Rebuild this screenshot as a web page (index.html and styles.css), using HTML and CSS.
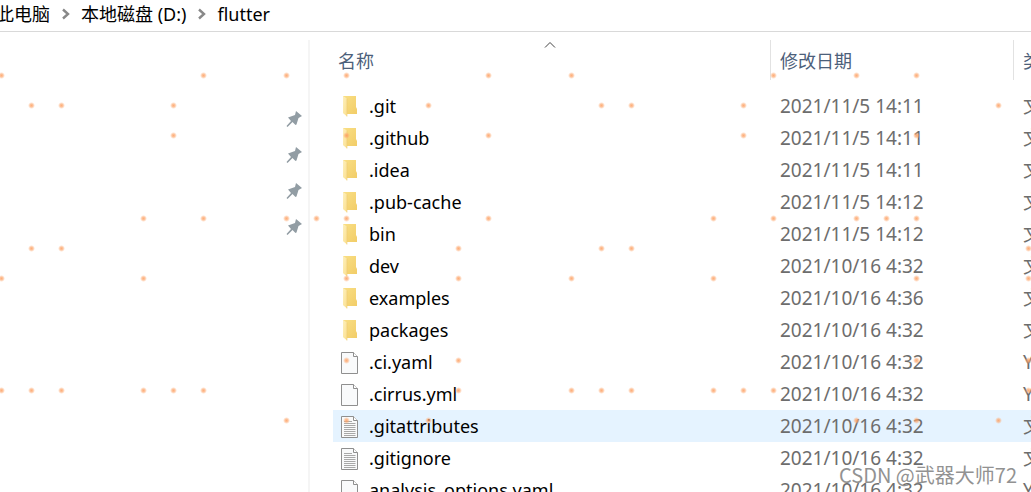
FILE: index.html
```
<!DOCTYPE html>
<html lang="zh-CN">
<head>
<meta charset="utf-8">
<title>flutter</title>
<link rel="stylesheet" href="styles.css">
</head>
<body>
<svg class="defs" aria-hidden="true">
  <defs>
    <linearGradient id="flap" x1="0" y1="0" x2="1" y2="1"><stop offset="0" stop-color="#fdf0be"/><stop offset="1" stop-color="#fbdf8c"/></linearGradient>
    <linearGradient id="back" x1="0" y1="0" x2="1" y2="1"><stop offset="0" stop-color="#f9df85"/><stop offset="1" stop-color="#f2cd68"/></linearGradient>
    <radialGradient id="spot"><stop offset="0" stop-color="#fd9a5a" stop-opacity=".8"/><stop offset=".45" stop-color="#fda468" stop-opacity=".65"/><stop offset="1" stop-color="#fdb483" stop-opacity="0"/></radialGradient>
  </defs>
  <symbol id="folder" viewBox="0 0 18 24">
    <path d="M2 1H15V12L16 14V19H6L2 18Z" fill="url(#back)"/>
    <path d="M2 1L6 3.500V21.500L2 18Z" fill="url(#flap)"/>
    <path d="M6 3.500V21.500" stroke="#ecca76" stroke-width=".6"/>
  </symbol>
  <symbol id="page" viewBox="0 0 18 24">
    <path d="M.5 1.500H12.500L16.500 5.500V22.500H.5Z" fill="#f9fafb" stroke="#8f8f8f"/>
    <path d="M12.500 1.500V5.500H16.500" fill="#fff" stroke="#8f8f8f"/>
  </symbol>
  <symbol id="text" viewBox="0 0 18 24">
    <use href="#page"/>
    <path d="M3 6.500H11M3 8.500H14.500M3 10.500H14.500M3 12.500H14.500M3 14.500H14.500M3 16.500H14.500M3 18.500H14.500M3 20.500H14.500" stroke="#a8a8a8"/>
  </symbol>
  <symbol id="pin" viewBox="0 0 16 16">
    <path d="M10 0L16 5L12.500 7L10.500 13.500L9.500 14L6.500 11L1.500 16L.5 15L5 10L2 6.500L9 4Z" fill="#929da4"/>
  </symbol>
  <symbol id="sep" viewBox="0 0 10 12">
    <path d="M2 1.500L7 6L2 10.500" fill="none" stroke="#888" stroke-width="2.400"/>
  </symbol>
  <symbol id="dot" viewBox="0 0 6 6"><circle cx="3" cy="3" r="3" fill="url(#spot)"/></symbol>
</svg>

<nav class="path" aria-label="路径">
  <a href="#">此电脑</a>
  <svg class="sep"><use href="#sep"/></svg>
  <a href="#">本地磁盘 (D:)</a>
  <svg class="sep"><use href="#sep"/></svg>
  <a href="#">flutter</a>
</nav>

<div class="body">
  <aside class="side">
    <button class="pin" aria-label="取消固定"><svg><use href="#pin"/></svg></button>
    <button class="pin" aria-label="取消固定"><svg><use href="#pin"/></svg></button>
    <button class="pin" aria-label="取消固定"><svg><use href="#pin"/></svg></button>
    <button class="pin" aria-label="取消固定"><svg><use href="#pin"/></svg></button>
  </aside>
  <main class="main">
    <table class="files">
      <colgroup><col class="c-name"><col class="c-date"><col class="c-type"></colgroup>
      <thead>
        <tr>
          <th><div class="head"><svg class="sort" viewBox="0 0 12 8"><path d="M1 6.500L6 1.500L11 6.500" fill="none" stroke="#444"/></svg>名称</div></th>
          <th><div class="head">修改日期</div></th>
          <th><div class="head">类型</div></th>
        </tr>
      </thead>
      <tbody>
        <tr><td><svg class="icon"><use href="#folder"/></svg>.git</td><td>2021/11/5 14:11</td><td>文件夹</td></tr>
        <tr><td><svg class="icon"><use href="#folder"/></svg>.github</td><td>2021/11/5 14:11</td><td>文件夹</td></tr>
        <tr><td><svg class="icon"><use href="#folder"/></svg>.idea</td><td>2021/11/5 14:11</td><td>文件夹</td></tr>
        <tr><td><svg class="icon"><use href="#folder"/></svg>.pub-cache</td><td>2021/11/5 14:12</td><td>文件夹</td></tr>
        <tr><td><svg class="icon"><use href="#folder"/></svg>bin</td><td>2021/11/5 14:12</td><td>文件夹</td></tr>
        <tr><td><svg class="icon"><use href="#folder"/></svg>dev</td><td>2021/10/16 4:32</td><td>文件夹</td></tr>
        <tr><td><svg class="icon"><use href="#folder"/></svg>examples</td><td>2021/10/16 4:36</td><td>文件夹</td></tr>
        <tr><td><svg class="icon"><use href="#folder"/></svg>packages</td><td>2021/10/16 4:32</td><td>文件夹</td></tr>
        <tr><td><svg class="icon"><use href="#page"/></svg>.ci.yaml</td><td>2021/10/16 4:32</td><td>YAML 文件</td></tr>
        <tr><td><svg class="icon"><use href="#page"/></svg>.cirrus.yml</td><td>2021/10/16 4:32</td><td>YML 文件</td></tr>
        <tr class="hover"><td><svg class="icon"><use href="#text"/></svg>.gitattributes</td><td>2021/10/16 4:32</td><td>文本文档</td></tr>
        <tr><td><svg class="icon"><use href="#text"/></svg>.gitignore</td><td>2021/10/16 4:32</td><td>文本文档</td></tr>
        <tr><td><svg class="icon"><use href="#page"/></svg>analysis_options.yaml</td><td>2021/10/16 4:32</td><td>YAML 文件</td></tr>
      </tbody>
    </table>
  </main>
</div>

<svg class="dots" id="dots" aria-hidden="true"></svg>
<div class="mark">CSDN @武器大师72</div>
<script src="dots.js"></script>
</body>
</html>
```
FILE: styles.css
```
* { box-sizing: border-box; }

html, body { height: 100%; }

body {
  margin: 0;
  display: flex;
  flex-direction: column;
  overflow: hidden;
  position: relative;
  background: #fff;
  color: #000;
  font: 18px/32px "Noto Sans", "Noto Sans CJK SC", sans-serif;
}

.defs { position: absolute; width: 0; height: 0; }

.path {
  flex: none;
  display: flex;
  align-items: center;
  height: 32px;
  margin-left: -4px;
  padding-bottom: 3px;
  border-bottom: 1px solid #d9d9d9;
  white-space: nowrap;
}

.path a { color: inherit; text-decoration: none; }

.sep { width: 10px; height: 12px; margin: 0 10px 0 11px; }

.body { flex: 1; display: flex; min-height: 0; padding-top: 8px; }

.side {
  flex: none;
  width: 310px;
  display: flex;
  flex-direction: column;
  align-items: flex-end;
  padding: 61px 6px 0 0;
  border-right: 2px solid #f5f5f5;
}

.pin {
  display: flex;
  align-items: center;
  height: 36px;
  padding: 0;
  border: 0;
  background: none;
}

.pin svg { width: 16px; height: 16px; }

.main { flex: 1; min-width: 0; overflow: hidden; padding-left: 23px; }

.files {
  width: 100%;
  table-layout: fixed;
  border-collapse: collapse;
}

.c-name { width: 437px; }
.c-date { width: 243px; }

th, td {
  height: 32px;
  padding: 0 0 0 10px;
  overflow: hidden;
  white-space: nowrap;
  text-align: left;
  font-weight: 400;
}

td { color: #6d6d6d; font-size: 19px; }
td:first-child { padding-left: 8px; color: #000; font-size: 18px; }

th { height: 50px; padding: 0 0 10px; vertical-align: top; color: #4c607a; }

.head {
  position: relative;
  height: 40px;
  padding: 5px 0 0 9px;
  border-left: 1px solid #e2e2e2;
}

th:first-child .head { border-left: 0; padding-left: 5px; }

.sort { position: absolute; top: 1px; left: 50%; margin-left: -8px; width: 12px; height: 8px; }

.icon { width: 18px; height: 24px; margin: 0 10px 2px 0; vertical-align: middle; }

.hover { background: #e5f3ff; }

.dots { position: absolute; inset: 0; width: 100%; height: 100%; pointer-events: none; }

.mark {
  position: absolute;
  right: 14px;
  bottom: 1px;
  color: #808080;
  opacity: .85;
  font-family: "Noto Sans CJK SC", sans-serif;
  font-size: 20px;
}
```
FILE: dots.js
```
const rows = {
  75: [1, 203, 286, 346, 488, 571, 773, 856, 916],
  105: [31, 61, 173, 428, 601, 631, 743, 998],
  135: [173, 346, 488, 743, 916],
  218: [143, 203, 286, 316, 346, 488, 713, 773, 856, 886, 916],
  248: [31, 61, 458, 601, 631, 1028],
  278: [1, 143, 346, 458, 571, 713, 916, 1028],
  360: [346, 458, 916, 1028],
  390: [1, 31, 61, 143, 173, 203, 458, 571, 601, 631, 713, 743, 773, 1028],
  420: [286, 346, 428, 856, 916, 998]
};
const layer = document.getElementById("dots");
for (const [y, xs] of Object.entries(rows)) {
  for (const x of xs) {
    const dot = document.createElementNS("http://www.w3.org/2000/svg", "use");
    dot.setAttribute("href", "#dot");
    dot.setAttribute("x", x - 3);
    dot.setAttribute("y", y - 3);
    dot.setAttribute("width", 7);
    dot.setAttribute("height", 7);
    layer.append(dot);
  }
}
```
